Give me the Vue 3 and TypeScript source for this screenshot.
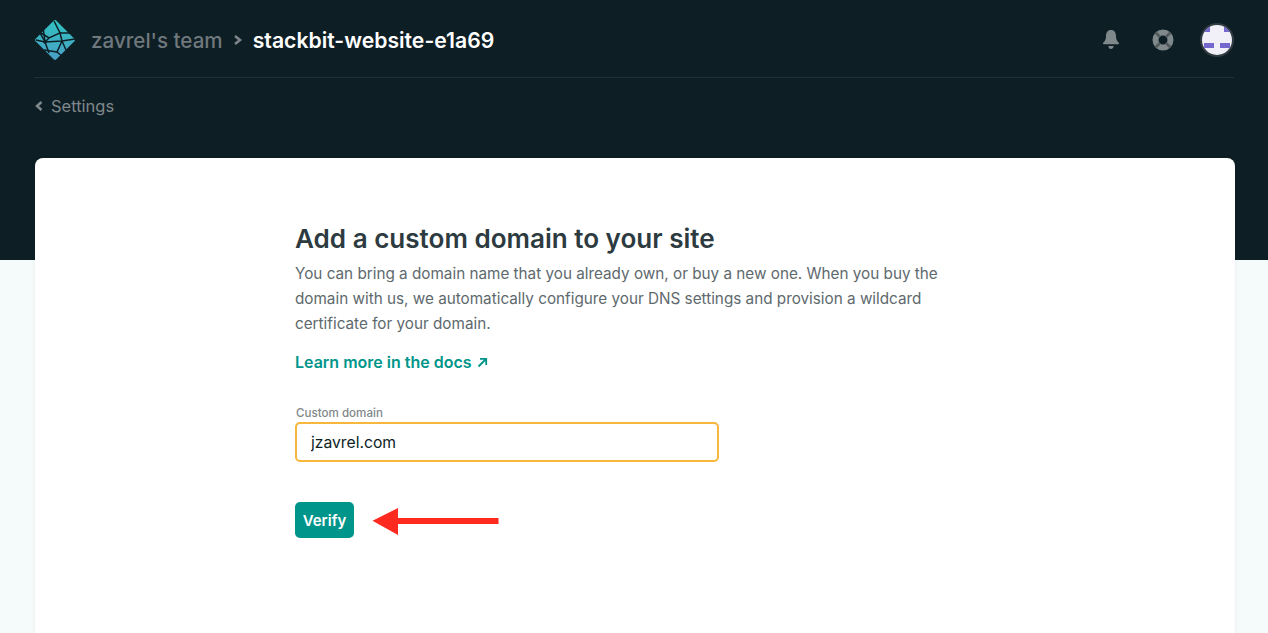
<script setup lang="ts">
const logoLines: string[] = [
  'M36 40 L45 42 L62 41 L75 39',
  'M45 42 L43 27',
  'M45 42 L40 33 M41 33 L49 38 L60 33 L54 21',
  'M60 33 L62 41 L57 52 L62 56',
  'M60 33 L70 33',
  'M62 41 L66 50',
  'M45 42 L49 53',
  'M49 38 L45 42',
  'M44 50 L57 52',
];
</script>

<template>
  <div class="page">
    <section class="hero">
      <header class="topbar">
        <div class="crumbs">
          <svg class="logo" width="42" height="42" viewBox="34 19 42 42" aria-hidden="true">
            <defs>
              <linearGradient id="logo-fill" x1="0" y1="0" x2="0" y2="1">
                <stop offset="0" stop-color="#30c2c0" />
                <stop offset="1" stop-color="#4a9fc6" />
              </linearGradient>
            </defs>
            <path d="M53.600 20.800a2 2 0 0 1 2.800 0l18 18a1.700 1.700 0 0 1 0 2.400l-18 18a2 2 0 0 1-2.800 0l-18-18a1.700 1.700 0 0 1 0-2.400z" fill="url(#logo-fill)" />
            <path v-for="(d, i) in logoLines" :key="i" :d="d" fill="none" stroke="#0e1e25" stroke-width="1.500" />
            <circle cx="45" cy="42" r="1.700" fill="#0e1e25" />
          </svg>
          <span class="team">zavrel's team</span>
          <svg class="sep" width="10" height="12" viewBox="0 0 10 12" aria-hidden="true">
            <path d="M2 2 L7 6 L2 10" fill="none" stroke="#7c8589" stroke-width="2.600" />
          </svg>
          <span class="site">stackbit-website-e1a69</span>
        </div>
        <div class="actions">
          <svg class="bell" width="18" height="22" viewBox="0 0 18 22" aria-hidden="true">
            <path d="M9 1c-3.400 0-5 2.700-5 6 0 3.600-1 5-2.800 6.800-.5.5-.2 1.400.6 1.400h14.400c.8 0 1.100-.9.6-1.400C15 12 14 10.600 14 7c0-3.300-1.600-6-5-6z" fill="#7f888b" />
            <path d="M6.300 17h5.400c-.3 1.800-1.300 3-2.700 3s-2.400-1.200-2.700-3z" fill="#7f888b" />
          </svg>
          <svg class="help" width="22" height="22" viewBox="0 0 22 22" aria-hidden="true">
            <circle cx="11" cy="11" r="7.500" fill="none" stroke="#7f888b" stroke-width="6" />
            <path d="M3.500 3.500 L8 8 M18.500 3.500 L14 8 M3.500 18.500 L8 14 M18.500 18.500 L14 14" stroke="#51595c" stroke-width="2.600" />
          </svg>
          <div class="avatar">
            <span class="px tl"></span><span class="px tr"></span>
            <span class="px bl"></span><span class="px br"></span>
          </div>
        </div>
      </header>
      <a class="back">
        <svg width="8" height="10" viewBox="0 0 8 10" aria-hidden="true">
          <path d="M6.500 1 L2 5 L6.500 9" fill="none" stroke="#7f888b" stroke-width="2.500" />
        </svg>
        <span>Settings</span>
      </a>
    </section>

    <main class="card">
      <h1>Add a custom domain to your site</h1>
      <p class="lead">
        You can bring a domain name that you already own, or buy a new one. When you buy the
        domain with us, we automatically configure your DNS settings and provision a wildcard
        certificate for your domain.
      </p>
      <a class="docs">
        Learn more in the docs
        <svg width="11" height="11" viewBox="0 0 11 11" aria-hidden="true">
          <path d="M1.500 9.500 L9 2 M3 1.800 H9.200 V8" fill="none" stroke="#00958a" stroke-width="1.800" />
        </svg>
      </a>
      <label class="field">
        <span class="field-label">Custom domain</span>
        <input class="field-input" type="text" value="jzavrel.com" />
      </label>
      <div class="verify-row">
        <button class="verify" type="button">Verify</button>
        <svg class="arrow" width="128" height="31" viewBox="0 0 128 31" aria-hidden="true">
          <path d="M0.500 15.700 L26 3 V13 H126.500 V19 H26 V30 Z" fill="#ff2a1f" />
        </svg>
      </div>
    </main>
  </div>
</template>

<style>
html,
body {
  margin: 0;
  background: #f5fafb;
  overflow: hidden;
}
</style>

<style scoped>
.page {
  height: 633px;
  overflow: hidden;
  background: #f5fafb;
  font-family: Inter, "Liberation Sans", sans-serif;
}
.hero {
  height: 260px;
  box-sizing: border-box;
  padding: 0 34px 0 34px;
  background: #0e1e25;
}
.topbar {
  height: 78px;
  box-sizing: border-box;
  border-bottom: 1px solid #242f35;
  display: flex;
  align-items: center;
  justify-content: space-between;
  padding-top: 3px;
}
.crumbs {
  display: flex;
  align-items: center;
}
.logo {
  margin-right: 15px;
}
.team {
  font-size: 20.6px;
  font-weight: 500;
  color: #6f787c;
}
.sep {
  margin: 0 10px 0 10px;
}
.site {
  font-size: 21.2px;
  font-weight: 600;
  color: #fff;
}
.actions {
  display: flex;
  align-items: center;
}
.help {
  margin-left: 32px;
}
.avatar {
  position: relative;
  width: 30px;
  height: 30px;
  margin-left: 26px;
  border: 2px solid #323d43;
  border-radius: 50%;
  background: #f1f0f8;
  overflow: hidden;
}
.px {
  position: absolute;
  background: #7468cf;
}
.tl { left: 1px; top: 2px; width: 7px; height: 5px; }
.tr { right: 1px; top: 2px; width: 7px; height: 5px; }
.bl { left: 2px; top: 18px; width: 10px; height: 5px; }
.br { right: 2px; top: 18px; width: 10px; height: 5px; }
.back {
  display: flex;
  align-items: center;
  gap: 8px;
  margin: 18px 0 0 1px;
  font-size: 16.5px;
  line-height: 20px;
  color: #7f888b;
}
.card {
  width: 1200px;
  height: 520px;
  box-sizing: border-box;
  margin: -102px 0 0 35px;
  padding: 63px 260px 0;
  background: #fff;
  border-radius: 8px;
  box-shadow: 0 0 4px rgba(14, 30, 37, 0.06);
}
h1 {
  margin: 0;
  font-size: 26.05px;
  line-height: 36px;
  font-weight: 600;
  color: #2d3b41;
}
.lead {
  width: 660px;
  margin: 4px 0 0;
  font-size: 15.27px;
  line-height: 25px;
  color: #5e696d;
}
.docs {
  display: flex;
  align-items: center;
  gap: 5px;
  margin-top: 14px;
  font-size: 16px;
  line-height: 25px;
  font-weight: 600;
  color: #00958a;
}
.field {
  display: block;
  margin-top: 31px;
}
.field-label {
  display: block;
  font-size: 11.6px;
  line-height: 14px;
  font-weight: 500;
  color: #7f888b;
  padding-left: 1px;
}
.field-input {
  display: block;
  width: 424px;
  height: 40px;
  box-sizing: border-box;
  margin-top: 2px;
  padding: 0 14px;
  border: 2px solid #f6b73c;
  border-radius: 5px;
  outline: none;
  background: #fff;
  font: 400 15.7px Inter, "Liberation Sans", sans-serif;
  color: #0e1e25;
}
.verify-row {
  display: flex;
  align-items: center;
  margin-top: 40px;
}
.verify {
  width: 59px;
  height: 36px;
  padding: 0;
  border: 0;
  border-radius: 5px;
  background: #00958a;
  color: #fff;
  font: 600 15px Inter, "Liberation Sans", sans-serif;
}
.arrow {
  margin-left: 18px;
}
</style>
